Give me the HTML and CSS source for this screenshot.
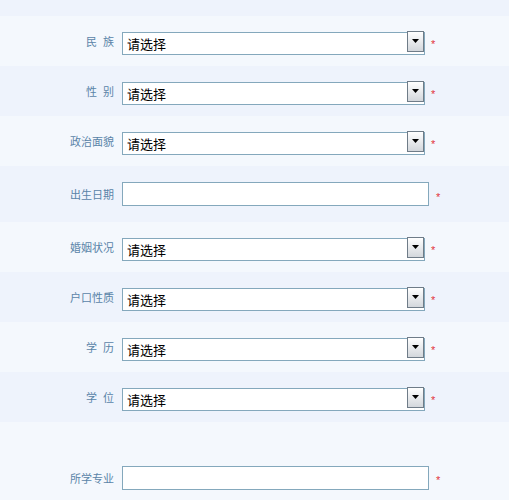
FILE: index.html
```html
<!DOCTYPE html>
<html lang="zh-CN">
<head>
    <meta charset="UTF-8">
    <title>基本信息</title>
    <link rel="stylesheet" href="styles.css">
</head>
<body>
<div class="form">
    <div class="top-gap"></div>

    <div class="row">
        <label class="label label-spaced">民族</label>
        <div class="select-box">
            <select><option>请选择</option></select>
            <span class="arrow"><svg width="7" height="4" viewBox="0 0 7 4"><path d="M0 0h7L3.5 4z" fill="#000"/></svg></span>
        </div>
        <span class="req">*</span>
    </div>

    <div class="row">
        <label class="label label-spaced">性别</label>
        <div class="select-box">
            <select><option>请选择</option></select>
            <span class="arrow"><svg width="7" height="4" viewBox="0 0 7 4"><path d="M0 0h7L3.5 4z" fill="#000"/></svg></span>
        </div>
        <span class="req">*</span>
    </div>

    <div class="row">
        <label class="label">政治面貌</label>
        <div class="select-box">
            <select><option>请选择</option></select>
            <span class="arrow"><svg width="7" height="4" viewBox="0 0 7 4"><path d="M0 0h7L3.5 4z" fill="#000"/></svg></span>
        </div>
        <span class="req">*</span>
    </div>

    <div class="row row-tall">
        <label class="label">出生日期</label>
        <input class="text" type="text">
        <span class="req req-input">*</span>
    </div>

    <div class="row">
        <label class="label">婚姻状况</label>
        <div class="select-box">
            <select><option>请选择</option></select>
            <span class="arrow"><svg width="7" height="4" viewBox="0 0 7 4"><path d="M0 0h7L3.5 4z" fill="#000"/></svg></span>
        </div>
        <span class="req">*</span>
    </div>

    <div class="row">
        <label class="label">户口性质</label>
        <div class="select-box">
            <select><option>请选择</option></select>
            <span class="arrow"><svg width="7" height="4" viewBox="0 0 7 4"><path d="M0 0h7L3.5 4z" fill="#000"/></svg></span>
        </div>
        <span class="req">*</span>
    </div>

    <div class="row">
        <label class="label label-spaced">学历</label>
        <div class="select-box">
            <select><option>请选择</option></select>
            <span class="arrow"><svg width="7" height="4" viewBox="0 0 7 4"><path d="M0 0h7L3.5 4z" fill="#000"/></svg></span>
        </div>
        <span class="req">*</span>
    </div>

    <div class="row">
        <label class="label label-spaced">学位</label>
        <div class="select-box">
            <select><option>请选择</option></select>
            <span class="arrow"><svg width="7" height="4" viewBox="0 0 7 4"><path d="M0 0h7L3.5 4z" fill="#000"/></svg></span>
        </div>
        <span class="req">*</span>
    </div>

    <div class="row row-last">
        <label class="label">所学专业</label>
        <input class="text" type="text">
        <span class="req req-input">*</span>
    </div>
</div>
</body>
</html>
```

FILE: styles.css
```css
body {
    margin: 0;
    padding: 0;
    background-color: #f4f8fd;
    font-family: "Noto Sans CJK SC", "Noto Sans", sans-serif;
}
.form {
    width: 509px;
}
.top-gap {
    height: 16px;
    background-color: #eef3fc;
}
.row {
    display: flex;
    align-items: center;
    height: 50px;
    background-color: #f4f8fd;
}
.row:nth-child(odd) {
    background-color: #eef3fc;
}
.row-tall {
    height: 56px;
}
.row-last {
    align-items: flex-start;
    height: 34px;
    padding-top: 44px;
}
.label {
    width: 114px;
    margin-right: 8px;
    text-align: right;
    font-size: 11px;
    color: #5a84a8;
}
.label-spaced {
    letter-spacing: 6px;
    width: 120px;
    margin-right: 2px;
}
.select-box {
    position: relative;
    width: 303px;
    height: 23px;
}
.select-box select {
    -webkit-appearance: none;
    appearance: none;
    width: 100%;
    height: 100%;
    margin: 0;
    padding: 0 0 0 4px;
    border: 1px solid #84a8bc;
    border-radius: 0;
    background-color: #fff;
    font-family: "Noto Sans CJK SC", sans-serif;
    font-size: 13px;
    color: #000;
    box-sizing: border-box;
    outline: none;
}
.arrow {
    position: absolute;
    top: 1px;
    right: 1px;
    width: 17px;
    height: 21px;
    box-sizing: border-box;
    border: 1px solid #6f7c88;
    background: linear-gradient(#ffffff, #d3d7dc);
    display: flex;
    align-items: center;
    justify-content: center;
    pointer-events: none;
}
.text {
    width: 307px;
    height: 24px;
    margin: 0;
    padding: 0 4px;
    border: 1px solid #84a8bc;
    background-color: #fff;
    box-sizing: border-box;
    outline: none;
}
.req {
    margin-left: 6px;
    padding-top: 6px;
    font-family: "Liberation Sans", sans-serif;
    font-size: 11px;
    line-height: 1;
    color: #e2343c;
}
.req-input {
    margin-left: 7px;
}
.row-last .req {
    padding-top: 9px;
}
.row-last .label {
    padding-top: 4px;
}
```
